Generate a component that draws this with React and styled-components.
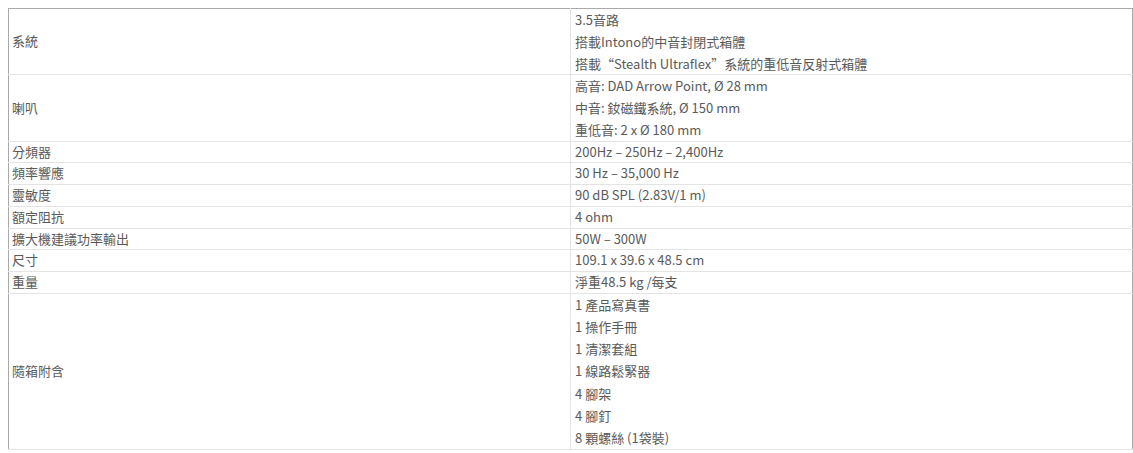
import React from "react";
import styled, { createGlobalStyle } from "styled-components";

const GlobalStyle = createGlobalStyle`
  html, body {
    margin: 0;
    padding: 0;
    background: #ffffff;
  }
  body {
    padding: 8px 0 0 8px;
    font-family: "Noto Sans CJK TC", "Noto Sans", sans-serif;
  }
`;

const SpecTable = styled.table`
  width: 1125px;
  border-collapse: collapse;
  border: 1px solid #a9a9a9;
  font-size: 13px;
  color: #5a5a5a;
`;

const Row = styled.tr`
  border-bottom: 1px solid #e4e4e4;
`;

const Label = styled.td`
  width: 555px;
  padding: 0 3px;
  line-height: 20.7px;
  vertical-align: middle;
  border-right: 1px solid #e4e4e4;
`;

// single-value rows are tighter than the stacked lists
const Value = styled.td`
  padding: 0 4px;
  line-height: ${(p) =>
    p.$lines > 3 ? "22.2px" : p.$lines > 1 ? "21.8px" : "20.7px"};
  vertical-align: middle;
`;

const Line = styled.div`
  white-space: nowrap;
`;

const specs = [
  {
    label: "系統",
    values: [
      "3.5音路",
      "搭載Intono的中音封閉式箱體",
      "搭載“Stealth Ultraflex”系統的重低音反射式箱體",
    ],
  },
  {
    label: "喇叭",
    values: [
      "高音: DAD Arrow Point, Ø 28 mm",
      "中音: 釹磁鐵系統, Ø 150 mm",
      "重低音: 2 x Ø 180 mm",
    ],
  },
  { label: "分頻器", values: ["200Hz – 250Hz – 2,400Hz"] },
  { label: "頻率響應", values: ["30 Hz – 35,000 Hz"] },
  { label: "靈敏度", values: ["90 dB SPL (2.83V/1 m)"] },
  { label: "額定阻抗", values: ["4 ohm"] },
  { label: "擴大機建議功率輸出", values: ["50W – 300W"] },
  { label: "尺寸", values: ["109.1 x 39.6 x 48.5 cm"] },
  { label: "重量", values: ["淨重48.5 kg /每支"] },
  {
    label: "隨箱附含",
    values: [
      "1 產品寫真書",
      "1 操作手冊",
      "1 清潔套組",
      "1 線路鬆緊器",
      "4 腳架",
      "4 腳釘",
      "8 顆螺絲 (1袋裝)",
    ],
  },
];

export default function App() {
  return (
    <>
      <GlobalStyle />
      <SpecTable>
        <tbody>
          {specs.map((spec) => (
            <Row key={spec.label}>
              <Label>{spec.label}</Label>
              <Value $lines={spec.values.length}>
                {spec.values.map((v) => (
                  <Line key={v}>{v}</Line>
                ))}
              </Value>
            </Row>
          ))}
        </tbody>
      </SpecTable>
    </>
  );
}
